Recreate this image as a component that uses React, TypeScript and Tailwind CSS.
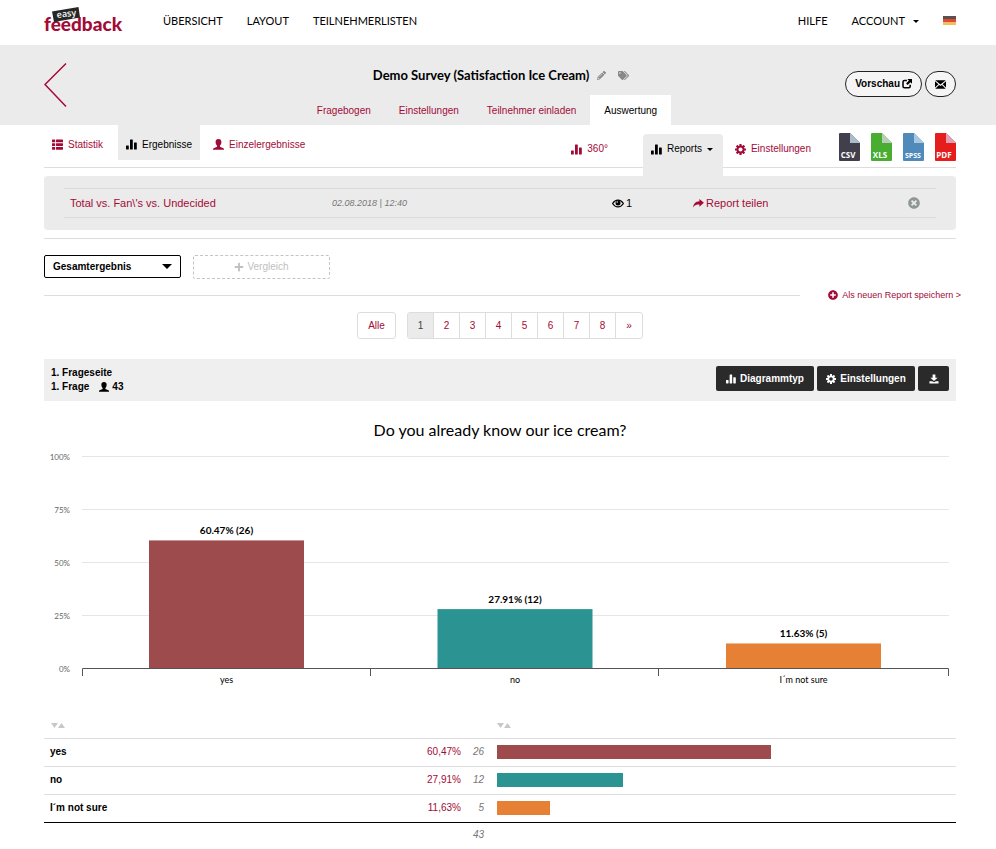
import React from 'react';
import { FaPencilAlt, FaPlus, FaPlusCircle, FaTags, FaTimesCircle } from 'react-icons/fa';

type IconProps = { className?: string };

const StatsIcon = ({ className = '' }: IconProps) => (
  <svg viewBox="0 0 11 11" className={className} fill="currentColor" aria-hidden="true">
    <rect x="0" y="6.500" width="2.800" height="4" rx=".5" />
    <rect x="4" y="0.500" width="2.800" height="10" rx=".5" />
    <rect x="8" y="3.500" width="2.800" height="7" rx=".5" />
  </svg>
);

const ListIcon = ({ className = '' }: IconProps) => (
  <svg viewBox="0 0 11 11" className={className} fill="currentColor" aria-hidden="true">
    {[0.5, 4.2, 7.9].map((y) => (
      <g key={y}>
        <rect x="0" y={y} width="3.200" height="2.800" rx=".4" />
        <rect x="4" y={y} width="7" height="2.800" rx=".4" />
      </g>
    ))}
  </svg>
);

const UserIcon = ({ className = '' }: IconProps) => (
  <svg viewBox="0 0 11 11" className={className} fill="currentColor" aria-hidden="true">
    <path d="M5.500 0C7.500 0 8.400 1.200 8.400 3c0 1.800-.7 2.900-1.400 3.600v1.200l3.400 1.400c.5.200.6.600.6 1.500H0c0-.9.100-1.300.6-1.500L4 7.800V6.600C3.300 5.900 2.600 4.800 2.600 3 2.600 1.200 3.500 0 5.500 0z" />
  </svg>
);

const CogIcon = ({ className = '' }: IconProps) => (
  <svg viewBox="0 0 12 12" className={className} aria-hidden="true">
    <defs>
      <mask id="cog-hole">
        <rect width="12" height="12" fill="#fff" />
        <circle cx="6" cy="6" r="2.200" fill="#000" />
      </mask>
    </defs>
    <g fill="currentColor" mask="url(#cog-hole)">
      <circle cx="6" cy="6" r="4.300" />
      {[0, 45, 90, 135].map((a) => (
        <rect key={a} x="4.800" y="0" width="2.400" height="12" rx=".4" transform={`rotate(${a} 6 6)`} />
      ))}
    </g>
  </svg>
);

const EyeIcon = ({ className = '' }: IconProps) => (
  <svg viewBox="0 0 12 9" className={className} aria-hidden="true">
    <path d="M.6 4.500C3.300 0 8.700 0 11.400 4.500 8.700 9 3.300 9 .6 4.500z" fill="none" stroke="currentColor" strokeWidth="1.200" />
    <circle cx="6" cy="3.900" r="2.500" fill="currentColor" />
    <circle cx="5.200" cy="3" r=".8" fill="#ebebeb" />
  </svg>
);

const ShareIcon = ({ className = '' }: IconProps) => (
  <svg viewBox="0 0 12 10" className={className} fill="currentColor" aria-hidden="true">
    <path d="M7 0 12 4.300 7 8.500V6C4 6 1.500 6.500 0 9.500 .3 5.500 3 2.600 7 2.500z" />
  </svg>
);

const OpenIcon = ({ className = '' }: IconProps) => (
  <svg viewBox="0 0 11 11" className={className} aria-hidden="true">
    <path d="M5.400 1.700H2.700Q1.100 1.700 1.100 3.300V8.100Q1.100 9.700 2.700 9.700H7.400Q9 9.700 9 8.100V6.300" fill="none" stroke="currentColor" strokeWidth="1.700" />
    <path d="M5.800 0H11V5.200L9.300 3.500 6.200 6.600 4.500 4.900 7.600 1.700z" fill="currentColor" />
  </svg>
);

const MailIcon = ({ className = '' }: IconProps) => (
  <svg viewBox="0 0 11 9" className={className} fill="currentColor" aria-hidden="true">
    <path d="M.3.200H10.700L5.500 4.600zM0 1.200 3.400 4.300 0 7.600zM11 1.200V7.600L7.600 4.300zM4.100 5 5.500 6.100 6.900 5 10.700 8.800H.3z" />
  </svg>
);

const DownloadIcon = ({ className = '' }: IconProps) => (
  <svg viewBox="0 0 11 11" className={className} fill="currentColor" aria-hidden="true">
    <path d="M4 .5H7V4H9.500L5.500 7.800 1.500 4H4zM.5 8H3.500L5.500 9 7.500 8H10.500V10.500H.5z" />
  </svg>
);

const Caret = ({ className = '' }: IconProps) => (
  <svg viewBox="0 0 8 4" className={className} fill="currentColor" aria-hidden="true">
    <path d="M0 0H8L4 4z" />
  </svg>
);

const Logo = () => (
  <svg viewBox="0 0 84 32" className="h-8 w-[84px]" role="img" aria-label="easy feedback">
    <text x="0" y="26" fontFamily="Lato, sans-serif" fontWeight="900" fontSize="19" fill="#a30b37">feedback</text>
    <path d="M8 6.500 34.500 2 36 12.500 10 17z" fill="#262626" />
    <text x="13" y="13" fontFamily="'Open Sans', sans-serif" fontWeight="600" fontSize="9" fill="#fff" transform="rotate(-7 13 13)">easy</text>
  </svg>
);

const Flag = () => (
  <svg viewBox="0 0 13 9" className="h-[9px] w-[13px]" role="img" aria-label="Deutsch">
    <path fill="#59504f" d="M0 0h13v3H0z" />
    <path fill="#df4a36" d="M0 3h13v3H0z" />
    <path fill="#f3bd62" d="M0 6h13v3H0z" />
  </svg>
);

const fileTypes = [
  { label: 'CSV', color: '#403f4b', fold: '#a9bccb' },
  { label: 'XLS', color: '#48ad31', fold: '#b9cdb9' },
  { label: 'SPSS', color: '#4f8abb', fold: '#a8c7e0' },
  { label: 'PDF', color: '#e51d1d', fold: '#e2a0b4' },
];

const FileIcon = ({ label, color, fold }: { label: string; color: string; fold: string }) => (
  <svg viewBox="0 0 21 28" className="h-7 w-[21px]" aria-hidden="true">
    <path d="M1 0H11L21 10V27Q21 28 20 28H1Q0 28 0 27V1Q0 0 1 0z" fill={color} />
    <path d="M11 0 21 10H11z" fill={fold} />
    <text x={label === 'SPSS' ? 10 : 9} y="25" textAnchor="middle" fontFamily="'Open Sans', sans-serif" fontWeight="700" fontSize={label === 'SPSS' ? 7 : 8} fill="#fff">{label}</text>
  </svg>
);

const results = [
  { name: 'yes', percent: 60.47, count: 26, color: '#9e4b4d' },
  { name: 'no', percent: 27.91, count: 12, color: '#2b9492' },
  { name: 'I´m not sure', percent: 11.63, count: 5, color: '#e58035' },
];

const Chart = () => (
  <svg viewBox="0 0 912 248" className="mt-0.5 block w-full" role="img" aria-label="Do you already know our ice cream?" fontFamily="Lato, sans-serif">
    {[100, 75, 50, 25, 0].map((v) => {
      const y = 224 - v * 2.12;
      return (
        <g key={v}>
          {v > 0 && <path d={`M38 ${Math.round(y)}.5H905`} stroke="#e6e6e6" />}
          <text x="26" y={y + 4} textAnchor="end" fontSize="8" fill="#666">{v}%</text>
        </g>
      );
    })}
    {results.map((r, i) => {
      const center = 182.5 + i * 288.5;
      const height = r.percent * 2.11;
      return (
        <g key={r.name} textAnchor="middle">
          <rect x={center - 77.5} y={224 - height} width="155" height={height} fill={r.color} />
          <text x={center} y={218 - height} fontSize="10" fontWeight="700" fill="#000">{`${r.percent.toFixed(2)}% (${r.count})`}</text>
          <text x={center} y="239" fontSize="9" fill="#000">{r.name}</text>
        </g>
      );
    })}
    <path d="M38.500 232V224.500H904.500V232M326.500 224V232M614.500 224V232" fill="none" stroke="#555" />
  </svg>
);

const SortButton = ({ label }: { label: string }) => (
  <button type="button" aria-label={label} className="flex items-center text-[#c8c8c8]">
    <svg viewBox="0 0 14 5" className="h-[5px] w-3.5" fill="currentColor" aria-hidden="true">
      <path d="M0 0H7L3.500 5zM7 5H14L10.500 0z" />
    </svg>
  </button>
);

export default function App() {
  return (
    <div className="bg-white font-['Liberation_Sans',Arial,sans-serif] text-[10px] leading-4 text-black">
      <header className="flex h-[45px] items-center pr-10 pl-11 font-[Lato,sans-serif] text-[11px]">
        <a href="#home" className="-mt-1"><Logo /></a>
        <nav className="ml-[35px] flex flex-1 items-center gap-6 pb-1">
          <a href="#uebersicht">ÜBERSICHT</a>
          <a href="#layout">LAYOUT</a>
          <a href="#teilnehmerlisten">TEILNEHMERLISTEN</a>
          <a href="#hilfe" className="ml-auto">HILFE</a>
          <button type="button" className="flex items-center gap-2">ACCOUNT <Caret className="mt-0.5 h-[3px] w-1.5" /></button>
          <button type="button"><Flag /></button>
        </nav>
      </header>

      <section className="grid h-20 grid-cols-[1fr_auto_1fr] bg-[#ebebeb] pr-10 pl-11">
        <a href="#zurueck" aria-label="Zurück" className="mt-[17px] justify-self-start">
          <svg viewBox="0 0 24 46" className="h-[46px] w-6" fill="none" stroke="#a30b37" strokeWidth="1.500">
            <path d="M22 1.500 1 22.500 22 44.500" />
          </svg>
        </a>
        <div className="flex flex-col justify-between pr-[26px]">
          <div className="mt-5 ml-[70px] flex items-center">
            <h1 className="font-[Lato,sans-serif] text-[13px] leading-5 font-bold">Demo Survey (Satisfaction Ice Cream)</h1>
            <button type="button" aria-label="Bearbeiten" className="ml-2 text-[#888]"><FaPencilAlt className="size-[9px]" /></button>
            <button type="button" aria-label="Tags" className="ml-3 text-[#888]"><FaTags className="size-[11px]" /></button>
          </div>
          <nav className="flex text-[#a30b37]">
            <a href="#fragebogen" className="px-3.5 pt-2 pb-1.5">Fragebogen</a>
            <a href="#einstellungen" className="px-3.5 pt-2 pb-1.5">Einstellungen</a>
            <a href="#einladen" className="px-3.5 pt-2 pb-1.5">Teilnehmer einladen</a>
            <a href="#auswertung" aria-current="page" className="bg-white px-3.5 pt-2 pb-1.5 text-black">Auswertung</a>
          </nav>
        </div>
        <div className="mt-[26px] flex items-start justify-end gap-[3px]">
          <button type="button" className="flex h-[26px] items-center gap-0.5 rounded-full border border-[#222] bg-[#f5f5f5] px-[9px] font-bold">Vorschau <OpenIcon className="size-2.5" /></button>
          <button type="button" aria-label="E-Mail" className="flex h-[26px] w-[31px] items-center justify-center rounded-full border border-[#222] bg-[#f5f5f5]"><MailIcon className="h-[9px] w-[11px]" /></button>
        </div>
      </section>

      <main className="pr-10 pl-11">
        <div className="flex h-[43px] items-start border-b border-[#ddd] text-[#a30b37]">
          <nav className="flex flex-1">
            <a href="#statistik" className="flex h-[35px] items-center gap-[5px] pt-1 pr-[15px] pl-2"><ListIcon className="size-[11px]" />Statistik</a>
            <a href="#ergebnisse" aria-current="page" className="flex h-[35px] items-center gap-[5px] bg-[#ebebeb] px-2 pt-1 text-black"><StatsIcon className="size-[11px]" />Ergebnisse</a>
            <a href="#einzelergebnisse" className="flex h-[35px] items-center gap-[5px] px-[13px] pt-1"><UserIcon className="size-[11px]" />Einzelergebnisse</a>
          </nav>
          <a href="#360" className="mt-2 flex h-8 items-center gap-[5px]"><StatsIcon className="size-[11px]" />360°</a>
          <button type="button" className="mt-[9px] ml-[35px] flex h-[42px] w-20 items-center gap-[5px] rounded-t bg-[#ebebeb] px-2 pb-3 text-black"><StatsIcon className="size-[11px]" />Reports<Caret className="h-[3px] w-1.5" /></button>
          <a href="#report-einstellungen" className="mt-2 ml-3 flex h-8 items-center gap-[5px]"><CogIcon className="size-[11px]" />Einstellungen</a>
          <div className="mt-2 ml-7 flex gap-[11px]">
            {fileTypes.map((f) => (
              <a key={f.label} href={`#${f.label}`} aria-label={f.label}><FileIcon {...f} /></a>
            ))}
          </div>
        </div>

        <section className="mt-2 rounded bg-[#ebebeb] px-5 py-3">
          <div className="grid h-[30px] grid-cols-[262px_280px_81px_1fr_auto] items-center border-y border-[#dadada] pr-4 pl-1.5 text-[11px]">
            <a href="#report" className="text-[#a30b37]">Total vs. Fan\'s vs. Undecided</a>
            <span className="text-[9px] text-[#777] italic">02.08.2018 | 12:40</span>
            <span className="flex items-center gap-0.5"><EyeIcon className="h-[9px] w-3" />1</span>
            <a href="#teilen" className="flex items-center gap-0.5 text-[#a30b37]"><ShareIcon className="h-[9px] w-[11px]" />Report teilen</a>
            <button type="button" aria-label="Report löschen" className="text-[#8f9794]"><FaTimesCircle className="size-3" /></button>
          </div>
        </section>

        <section className="mt-2 border-t border-[#ddd] pt-4">
          <div className="flex gap-3">
            <div className="relative w-[137px]">
              <select aria-label="Ergebnis" className="h-[23px] w-full appearance-none rounded-xs border border-black bg-white pl-2 text-[10px] font-bold">
                <option>Gesamtergebnis</option>
              </select>
              <Caret className="pointer-events-none absolute top-[9px] right-[9px] h-[5px] w-2.5" />
            </div>
            <button type="button" className="flex h-6 w-[137px] items-center justify-center gap-[3px] rounded-xs border border-dashed border-[#c4c4c4] text-[#c0c0c0]"><FaPlus className="size-2.5" />Vergleich</button>
          </div>
          <div className="-mr-2 mt-2 flex items-center">
            <hr className="mr-7 flex-1 border-[#ddd]" />
            <a href="#speichern" className="mr-[3px] flex items-center gap-1 text-[9px] text-[#a30b37]"><FaPlusCircle className="size-2.5" />Als neuen Report speichern &gt;</a>
          </div>
        </section>

        <nav aria-label="Seiten" className="mt-[9px] flex justify-center gap-[11px] text-[#a30b37]">
          <a href="#alle" className="flex h-[27px] w-[39px] items-center justify-center rounded-[3px] border border-[#ddd]">Alle</a>
          <div className="flex divide-x divide-[#ddd] overflow-hidden rounded-[3px] border border-[#ddd]">
            {['1', '2', '3', '4', '5', '6', '7', '8', '»'].map((p) => (
              <a key={p} href={`#seite-${p}`} className={p === '1' ? 'flex w-[26px] items-center justify-center bg-[#ebebeb] text-[#444]' : 'flex w-[26px] items-center justify-center'}>{p}</a>
            ))}
          </div>
        </nav>

        <section className="mt-5 flex h-[42px] items-start bg-[#efefef] px-[7px] pt-[7px]">
          <div className="flex-1 leading-[14px] font-bold">
            <p>1. Frageseite</p>
            <p className="flex items-center">1. Frage <UserIcon className="mr-[3px] ml-2.5 size-2.5" />43</p>
          </div>
          <div className="flex h-[25px] gap-[3px] font-bold text-white">
            <button type="button" className="flex w-[98px] items-center justify-center gap-1 rounded-xs bg-[#2a2a2a]"><StatsIcon className="size-2.5" />Diagrammtyp</button>
            <button type="button" className="flex w-[98px] items-center justify-center gap-1 rounded-xs bg-[#2a2a2a]"><CogIcon className="size-2.5" />Einstellungen</button>
            <button type="button" aria-label="Herunterladen" className="flex w-[31px] items-center justify-center rounded-xs bg-[#2a2a2a]"><DownloadIcon className="size-2.5" /></button>
          </div>
        </section>

        <h2 className="mt-[17px] text-center font-[Lato,sans-serif] text-base leading-6">Do you already know our ice cream?</h2>
        <Chart />

        <table className="mt-[21px] w-full table-fixed border-collapse">
          <colgroup>
            <col className="w-[340px]" />
            <col className="w-[77px]" />
            <col className="w-[36px]" />
            <col />
          </colgroup>
          <thead>
            <tr className="h-[25px] border-b border-[#ddd]">
              <th colSpan={3} className="pl-[7px]"><SortButton label="Nach Antwort sortieren" /></th>
              <th><SortButton label="Nach Anzahl sortieren" /></th>
            </tr>
          </thead>
          <tbody>
            {results.map((r) => (
              <tr key={r.name} className="h-7 border-b border-[#ddd] last:border-black">
                <th scope="row" className="p-0 pl-1.5 text-left font-bold">{r.name}</th>
                <td className="p-0 text-right text-[#a30b37]">{r.percent.toFixed(2).replace('.', ',')}%</td>
                <td className="p-0 pr-[13px] text-right text-[#777] italic">{r.count}</td>
                <td className="p-0 pr-1.5"><div className="h-3.5" style={{ width: `${r.percent}%`, backgroundColor: r.color }} /></td>
              </tr>
            ))}
          </tbody>
          <tfoot>
            <tr className="h-[26px]">
              <td colSpan={3} className="p-0 pr-[13px] text-right text-[#777] italic">43</td>
              <td />
            </tr>
          </tfoot>
        </table>
      </main>
    </div>
  );
}
